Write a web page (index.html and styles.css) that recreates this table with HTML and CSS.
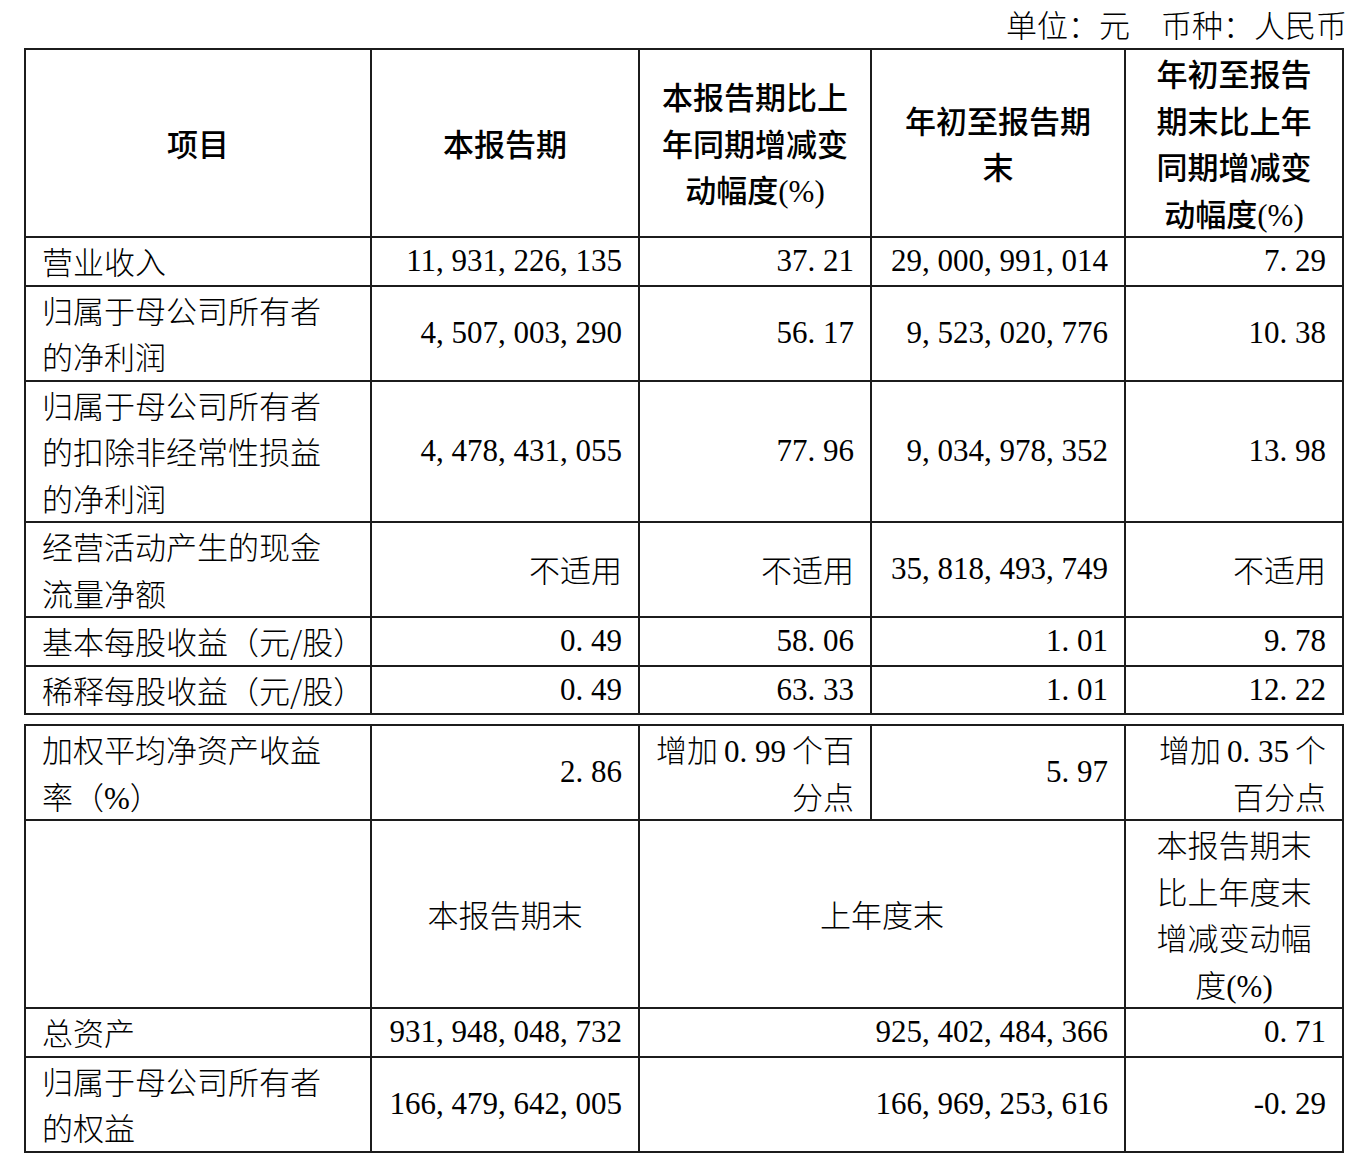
FILE: index.html
```html
<!DOCTYPE html>
<html lang="zh-CN">
<head>
<meta charset="utf-8">
<title>主要会计数据和财务指标</title>
<link rel="stylesheet" href="styles.css">
</head>
<body>
<div class="page">
  <div class="unit">单位：元　币种：人民币</div>

  <table class="fin">
    <colgroup><col class="c1"><col class="c2"><col class="c3"><col class="c4"><col class="c5"></colgroup>
    <thead>
      <tr>
        <th>项目</th>
        <th>本报告期</th>
        <th>本报告期比上<br>年同期增减变<br>动幅度<span class="d">(%)</span></th>
        <th>年初至报告期<br>末</th>
        <th>年初至报告<br>期末比上年<br>同期增减变<br>动幅度<span class="d">(%)</span></th>
      </tr>
    </thead>
    <tbody>
      <tr>
        <td class="lbl">营业收入</td>
        <td class="num">11<span class="p">,</span>931<span class="p">,</span>226<span class="p">,</span>135</td>
        <td class="num">37<span class="p">.</span>21</td>
        <td class="num">29<span class="p">,</span>000<span class="p">,</span>991<span class="p">,</span>014</td>
        <td class="num">7<span class="p">.</span>29</td>
      </tr>
      <tr>
        <td class="lbl">归属于母公司所有者<br>的净利润</td>
        <td class="num">4<span class="p">,</span>507<span class="p">,</span>003<span class="p">,</span>290</td>
        <td class="num">56<span class="p">.</span>17</td>
        <td class="num">9<span class="p">,</span>523<span class="p">,</span>020<span class="p">,</span>776</td>
        <td class="num">10<span class="p">.</span>38</td>
      </tr>
      <tr>
        <td class="lbl">归属于母公司所有者<br>的扣除非经常性损益<br>的净利润</td>
        <td class="num">4<span class="p">,</span>478<span class="p">,</span>431<span class="p">,</span>055</td>
        <td class="num">77<span class="p">.</span>96</td>
        <td class="num">9<span class="p">,</span>034<span class="p">,</span>978<span class="p">,</span>352</td>
        <td class="num">13<span class="p">.</span>98</td>
      </tr>
      <tr>
        <td class="lbl">经营活动产生的现金<br>流量净额</td>
        <td class="num cjk">不适用</td>
        <td class="num cjk">不适用</td>
        <td class="num">35<span class="p">,</span>818<span class="p">,</span>493<span class="p">,</span>749</td>
        <td class="num cjk">不适用</td>
      </tr>
      <tr>
        <td class="lbl">基本每股收益（元/股）</td>
        <td class="num">0<span class="p">.</span>49</td>
        <td class="num">58<span class="p">.</span>06</td>
        <td class="num">1<span class="p">.</span>01</td>
        <td class="num">9<span class="p">.</span>78</td>
      </tr>
      <tr>
        <td class="lbl">稀释每股收益（元/股）</td>
        <td class="num">0<span class="p">.</span>49</td>
        <td class="num">63<span class="p">.</span>33</td>
        <td class="num">1<span class="p">.</span>01</td>
        <td class="num">12<span class="p">.</span>22</td>
      </tr>
    </tbody>
  </table>

  <table class="fin second">
    <colgroup><col class="c1"><col class="c2"><col class="c3"><col class="c4"><col class="c5"></colgroup>
    <tbody>
      <tr>
        <td class="lbl">加权平均净资产收益<br>率（<span class="d">%</span>）</td>
        <td class="num">2<span class="p">.</span>86</td>
        <td class="num cjk">增加<span class="d gap">0<span class="p">.</span>99</span>个百<br>分点</td>
        <td class="num">5<span class="p">.</span>97</td>
        <td class="num cjk">增加<span class="d gap">0<span class="p">.</span>35</span>个<br>百分点</td>
      </tr>
      <tr>
        <td class="lbl"></td>
        <td class="ctr">本报告期末</td>
        <td class="ctr" colspan="2">上年度末</td>
        <td class="ctr">本报告期末<br>比上年度末<br>增减变动幅<br>度<span class="d">(%)</span></td>
      </tr>
      <tr>
        <td class="lbl">总资产</td>
        <td class="num">931<span class="p">,</span>948<span class="p">,</span>048<span class="p">,</span>732</td>
        <td class="num" colspan="2">925<span class="p">,</span>402<span class="p">,</span>484<span class="p">,</span>366</td>
        <td class="num">0<span class="p">.</span>71</td>
      </tr>
      <tr>
        <td class="lbl">归属于母公司所有者<br>的权益</td>
        <td class="num">166<span class="p">,</span>479<span class="p">,</span>642<span class="p">,</span>005</td>
        <td class="num" colspan="2">166<span class="p">,</span>969<span class="p">,</span>253<span class="p">,</span>616</td>
        <td class="num">-0<span class="p">.</span>29</td>
      </tr>
    </tbody>
  </table>
</div>
</body>
</html>
```

FILE: styles.css
```css
html, body {
  margin: 0;
  padding: 0;
  background: #ffffff;
}

body {
  font-family: "Noto Sans CJK SC", "Liberation Serif", sans-serif;
  font-size: 31px;
  color: #000000;
}

.page {
  padding: 0 10px 0 24px;
}

.unit {
  height: 48px;
  line-height: 48px;
  text-align: right;
  font-weight: 300;
  white-space: nowrap;
}

.fin {
  border-collapse: collapse;
  table-layout: fixed;
  width: 1318px;
}

.fin.second {
  margin-top: 9px;
}

.c1 { width: 346px; }
.c2 { width: 268px; }
.c3 { width: 232px; }
.c4 { width: 254px; }
.c5 { width: 218px; }

.fin th,
.fin td {
  border: 2px solid #1c1c1c;
  padding: 0 16px;
  line-height: 46.5px;
  vertical-align: middle;
  white-space: nowrap;
}

.fin th {
  font-weight: 500;
  text-align: center;
}

.fin td {
  font-weight: 300;
}

.lbl { text-align: left; }
.ctr { text-align: center; }

.num {
  text-align: right;
  font-family: "Liberation Serif", "Noto Sans CJK SC", serif;
}

.num.cjk {
  font-family: "Noto Sans CJK SC", "Liberation Serif", sans-serif;
}

.d {
  font-family: "Liberation Serif", "Noto Sans CJK SC", serif;
  line-height: 1;
}

.p { margin-right: 0.25em; }
.gap { margin: 0 6px; }
```
